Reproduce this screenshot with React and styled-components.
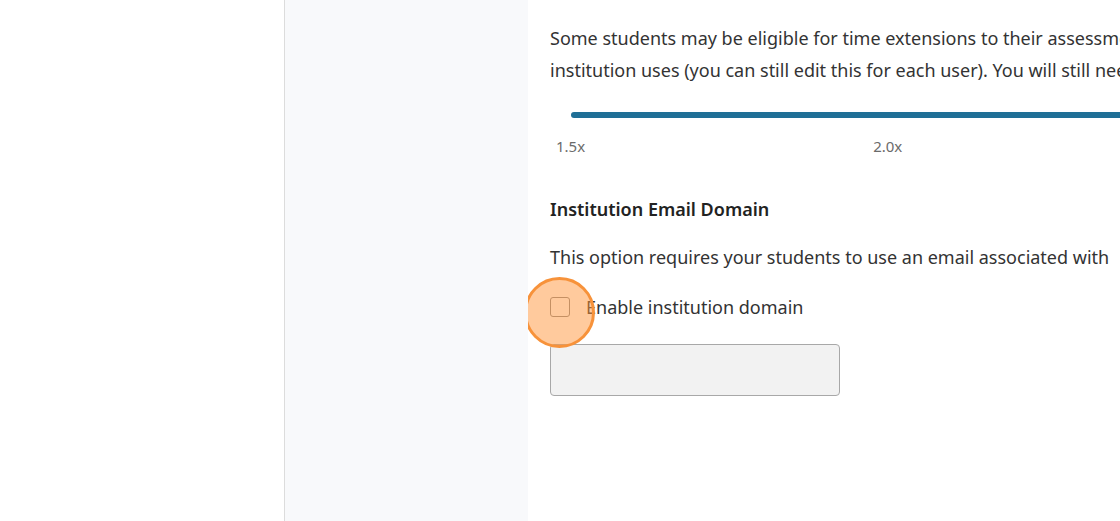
import styled, { createGlobalStyle } from "styled-components";

const GlobalStyle = createGlobalStyle`
    html, body {
        margin: 0;
        padding: 0;
        height: 100%;
        overflow: hidden;
        background: #ffffff;
        font-family: "Noto Sans", "Open Sans", sans-serif;
        color: #333;
    }
    #root {
        height: 100%;
    }
`;

const Page = styled.div`
    display: flex;
    height: 521px;
    width: 1120px;
    overflow: hidden;
`;

const Sidebar = styled.aside`
    flex: 0 0 284px;
    background: #ffffff;
    border-right: 1px solid #dcdcdc;
`;

const SubPanel = styled.div`
    flex: 0 0 243px;
    background: #f8f9fb;
`;

const Content = styled.main`
    flex: 1;
    min-width: 0;
    padding: 22px 0 0 22px;
    overflow: hidden;
`;

const Text = styled.p`
    margin: 0;
    font-size: 18px;
    line-height: 32px;
    color: #333;
    white-space: nowrap;
`;

const Slider = styled.div`
    width: 900px;
    margin: 26px 0 0 0;
`;

const Track = styled.div`
    height: 6px;
    margin-left: 21px;
    border-radius: 3px;
    background: #1f6f96;
`;

const Ticks = styled.div`
    display: flex;
    margin-top: 18px;
    padding-left: 6px;
    gap: 288px;
`;

const Tick = styled.span`
    font-size: 15px;
    line-height: 20px;
    color: #6b6b6b;
`;

const Heading = styled.h3`
    margin: 41px 0 20px;
    font-size: 18px;
    line-height: 24px;
    font-weight: 600;
    color: #222;
`;

const CheckRow = styled.label`
    position: relative;
    display: flex;
    align-items: center;
    gap: 16px;
    margin-top: 22px;
    font-size: 18px;
    line-height: 24px;
    color: #333;
`;

const Box = styled.span`
    width: 20px;
    height: 20px;
    box-sizing: border-box;
    border: 1px solid #8a8a8a;
    border-radius: 3px;
    background: #fff;
`;

const Highlight = styled.span`
    position: absolute;
    left: -26px;
    top: -18px;
    width: 71px;
    height: 71px;
    box-sizing: border-box;
    border-radius: 50%;
    border: 3px solid #f7923a;
    background: rgba(255, 150, 60, 0.5);
    pointer-events: none;
`;

const DomainInput = styled.input`
    display: block;
    width: 290px;
    height: 52px;
    box-sizing: border-box;
    margin-top: 25px;
    border: 1px solid #a8a8a8;
    border-radius: 4px;
    background: #f2f2f2;
    font-family: inherit;
    font-size: 16px;
    padding: 0 12px;
`;

export default function App() {
    return (
        <>
            <GlobalStyle />
            <Page>
                <Sidebar />
                <SubPanel />
                <Content>
                    <Text>Some students may be eligible for time extensions to their assessments.</Text>
                    <Text>institution uses (you can still edit this for each user). You will still need</Text>
                    <Slider>
                        <Track />
                        <Ticks>
                            <Tick>1.5x</Tick>
                            <Tick>2.0x</Tick>
                        </Ticks>
                    </Slider>
                    <Heading>Institution Email Domain</Heading>
                    <Text>This option requires your students to use an email associated with</Text>
                    <CheckRow>
                        <Box />
                        Enable institution domain
                        <Highlight />
                    </CheckRow>
                    <DomainInput type="text" aria-label="Institution domain" />
                </Content>
            </Page>
        </>
    );
}
